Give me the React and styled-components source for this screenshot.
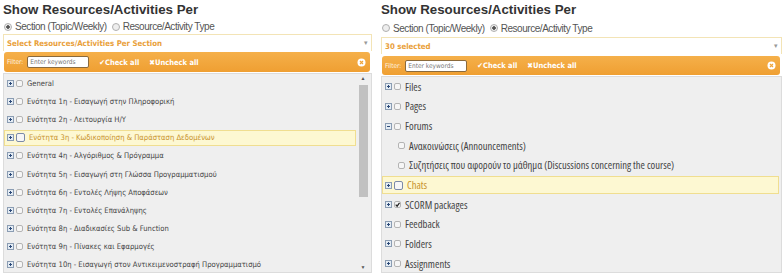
import styled, { createGlobalStyle } from 'styled-components';

const GlobalStyle = createGlobalStyle`
  html, body {
    margin: 0;
    padding: 0;
    background: #fff;
  }
  body {
    font-family: "Liberation Sans", Arial, sans-serif;
    width: 782px;
    height: 275px;
    overflow: hidden;
  }
`;

const sections = [
  'General',
  'Ενότητα 1η - Εισαγωγή στην Πληροφορική',
  'Ενότητα 2η - Λειτουργία Η/Υ',
  'Ενότητα 3η - Κωδικοποίηση & Παράσταση Δεδομένων',
  'Ενότητα 4η - Αλγόριθμος & Πρόγραμμα',
  'Ενότητα 5η - Εισαγωγή στη Γλώσσα Προγραμματισμού',
  'Ενότητα 6η - Εντολές Λήψης Αποφάσεων',
  'Ενότητα 7η - Εντολές Επανάληψης',
  'Ενότητα 8η - Διαδικασίες Sub & Function',
  'Ενότητα 9η - Πίνακες και Εφαρμογές',
  'Ενότητα 10η - Εισαγωγή στον Αντικειμενοστραφή Προγραμματισμό',
];

const types = [
  { label: 'Files' },
  { label: 'Pages' },
  { label: 'Forums', open: true },
  { label: 'Ανακοινώσεις (Announcements)', child: true },
  { label: 'Συζητήσεις που αφορούν το μάθημα (Discussions concerning the course)', child: true },
  { label: 'Chats', active: true },
  { label: 'SCORM packages', checked: true },
  { label: 'Feedback' },
  { label: 'Folders' },
  { label: 'Assignments' },
];

function Expander({ open }) {
  return (
    <svg width="7" height="7" viewBox="0 0 7 7">
      <rect x="0.5" y="0.5" width="6" height="6" fill="#e4ecf4" stroke="#8b9db3" />
      <path d={open ? 'M2 3.5h3' : 'M2 3.5h3M3.5 2v3'} stroke="#2c4a78" strokeWidth="1" />
    </svg>
  );
}

function Check({ checked, big }) {
  const s = big ? 9 : 7;
  return (
    <svg width={s} height={s} viewBox={`0 0 ${s} ${s}`}>
      <rect x="0.5" y="0.5" width={s - 1} height={s - 1} rx="1.5" fill="#f6f6f6" stroke={big ? '#7b8aa8' : '#b4b4b4'} />
      {checked && <path d="M1.7 3.6l1.4 1.6 2.4-3.4" stroke="#222" strokeWidth="1.2" fill="none" />}
    </svg>
  );
}

function FilterClear() {
  return (
    <svg width="9" height="9" viewBox="0 0 9 9">
      <circle cx="4.5" cy="4.5" r="4" fill="#fff" />
      <path d="M3 3l3 3M6 3l-3 3" stroke="#f0a53a" strokeWidth="1.2" />
    </svg>
  );
}

function Panel({ width, selectText, radio, children, wide }) {
  return (
    <PanelBox $width={width}>
      <Title>Show Resources/Activities Per</Title>
      <RadioRow $wide={wide}>
        <Radio $on={radio === 0} />
        <RadioLabel>Section (Topic/Weekly)</RadioLabel>
        <Radio $on={radio === 1} />
        <RadioLabel>Resource/Activity Type</RadioLabel>
      </RadioRow>
      <SelectBox>
        <SelectText>{selectText}</SelectText>
        <Caret>▾</Caret>
      </SelectBox>
      <FilterBar $wide={wide}>
        <FilterLabel>Filter:</FilterLabel>
        <KeywordInput placeholder="Enter keywords" />
        <BarLink>✔Check all</BarLink>
        <BarLink>✖Uncheck all</BarLink>
        <Spacer />
        <FilterClear />
      </FilterBar>
      {children}
    </PanelBox>
  );
}

export default function App() {
  return (
    <Page>
      <GlobalStyle />
      <Panel width={372} selectText="Select Resources/Activities Per Section" radio={0}>
        <ListFrame>
          <Rows $top={0}>
            {sections.map((s, i) => (
              <SectionRow key={s} $active={i === 3}>
                <Expander />
                <Check big={i === 3} />
                <RowText $active={i === 3}>{s}</RowText>
              </SectionRow>
            ))}
          </Rows>
          <Scrollbar>
            <Arrow>▲</Arrow>
            <Track>
              <Thumb />
            </Track>
            <Arrow>▼</Arrow>
          </Scrollbar>
        </ListFrame>
      </Panel>
      <Panel width={404} selectText="30 selected" radio={1} wide>
        <ListFrame>
          <Rows $top={0}>
            {types.map((t) => (
              <TypeRow key={t.label} $active={t.active} $child={t.child}>
                {!t.child && <Expander open={t.open} />}
                <Check checked={t.checked} big={t.active} />
                <TypeText $active={t.active}>{t.label}</TypeText>
              </TypeRow>
            ))}
          </Rows>
        </ListFrame>
      </Panel>
    </Page>
  );
}

const Page = styled.div`
  display: flex;
  gap: 6px;
  width: 782px;
  height: 275px;
`;

const PanelBox = styled.div`
  width: ${(p) => p.$width}px;
  display: flex;
  flex-direction: column;
  padding-left: 3px;
  box-sizing: border-box;
`;

const Title = styled.div`
  flex-shrink: 0;
  font-family: "Liberation Sans", Arial, sans-serif;
  font-weight: bold;
  font-size: 13.3px;
  color: #333;
  height: 19px;
  line-height: 19px;
`;

const RadioRow = styled.div`
  flex-shrink: 0;
  display: flex;
  align-items: center;
  height: ${(p) => (p.$wide ? 18 : 15)}px;
  padding-left: 1px;
`;

const Radio = styled.span`
  width: 6px;
  height: 6px;
  border-radius: 50%;
  border: 1px solid #b0b0b0;
  background: ${(p) => (p.$on ? 'radial-gradient(circle, #555 0 1.5px, #eee 2px)' : '#eee')};
  margin-right: 3px;
`;

const RadioLabel = styled.span`
  font-family: "Liberation Sans", Arial, sans-serif;
  font-size: 10px;
  letter-spacing: -0.45px;
  color: #555;
  margin-right: 5px;
`;

const SelectBox = styled.div`
  flex-shrink: 0;
  height: 16px;
  border: 1px solid #f3e4b6;
  border-bottom: none;
  display: flex;
  align-items: center;
  padding: 0 3px;
`;

const SelectText = styled.span`
  flex: 1;
  font-family: "DejaVu Sans Condensed", "DejaVu Sans", sans-serif;
  font-weight: bold;
  font-size: 7.8px;
  color: #e9a03a;
`;

const Caret = styled.span`
  font-size: 7px;
  color: #999;
`;

const FilterBar = styled.div`
  flex-shrink: 0;
  height: ${(p) => (p.$wide ? 19 : 20)}px;
  margin: ${(p) => (p.$wide ? '2px 2px 0 1px' : '1px 2px 0 1px')};
  border-radius: 3px;
  background: linear-gradient(#f5b04a, #ef9f32);
  display: flex;
  align-items: center;
  padding: 0 4px 0 3px;
  gap: 6px;
`;

const FilterLabel = styled.span`
  font-family: "DejaVu Sans Condensed", "DejaVu Sans", sans-serif;
  font-size: 6.5px;
  color: #fff4e0;
  margin-right: -2px;
`;

const KeywordInput = styled.input`
  width: 56px;
  height: 10px;
  padding: 0 2px;
  border: 1px solid #8a6a3c;
  border-radius: 2px;
  font-family: "DejaVu Sans Condensed", "DejaVu Sans", sans-serif;
  font-size: 6.5px;
  outline: none;
  &::placeholder {
    color: #777;
  }
`;

const BarLink = styled.span`
  font-family: "DejaVu Sans Condensed", "DejaVu Sans", sans-serif;
  font-weight: bold;
  font-size: 7.5px;
  color: #fff;
  margin-left: 4px;
`;

const Spacer = styled.span`
  flex: 1;
`;

const ListFrame = styled.div`
  flex: 1;
  min-height: 0;
  margin-top: 1px;
  margin-bottom: 2px;
  border: 1px solid #dcdcdc;
  background: #efefef;
  display: flex;
  overflow: hidden;
`;

const Rows = styled.div`
  flex: 1;
  padding-top: ${(p) => p.$top || 0}px;
  overflow: hidden;
`;

const SectionRow = styled.div`
  height: ${(p) => (p.$active ? 16 : 18.2)}px;
  margin: ${(p) => (p.$active ? '1px 2px 1.2px 0' : '0')};
  display: flex;
  align-items: center;
  gap: 2px;
  padding-left: 2px;
  box-sizing: border-box;
  background: ${(p) => (p.$active ? '#fdf8d2' : 'transparent')};
  border: 1px solid ${(p) => (p.$active ? '#f0de90' : 'transparent')};
`;

const RowText = styled.span`
  font-family: "DejaVu Sans Condensed", "DejaVu Sans", sans-serif;
  font-size: 7.6px;
  color: ${(p) => (p.$active ? '#c8922c' : '#444')};
  margin-left: 2px;
  white-space: nowrap;
`;

const TypeRow = styled.div`
  height: ${(p) => (p.$active ? 17.6 : 19.65)}px;
  margin: ${(p) => (p.$active ? '1px 2px 1px 0' : '0')};
  display: flex;
  align-items: center;
  gap: 2px;
  padding-left: ${(p) => (p.$child ? 15 : 2)}px;
  box-sizing: border-box;
  background: ${(p) => (p.$active ? '#fdf8d2' : 'transparent')};
  border: 1px solid ${(p) => (p.$active ? '#f0de90' : 'transparent')};
`;

const TypeText = styled.span`
  font-family: "Open Sans", sans-serif;
  font-stretch: 80%;
  font-size: 10.6px;
  color: ${(p) => (p.$active ? '#c8922c' : '#444')};
  margin-left: 2px;
  white-space: nowrap;
`;

const Scrollbar = styled.div`
  width: 10px;
  display: flex;
  flex-direction: column;
  align-items: center;
  margin-right: 3px;
`;

const Arrow = styled.span`
  font-size: 5px;
  color: #555;
  height: 9px;
  line-height: 9px;
`;

const Track = styled.div`
  flex: 1;
  width: 9px;
  padding-top: 2px;
`;

const Thumb = styled.div`
  height: 112px;
  background: #c1c1c1;
`;
